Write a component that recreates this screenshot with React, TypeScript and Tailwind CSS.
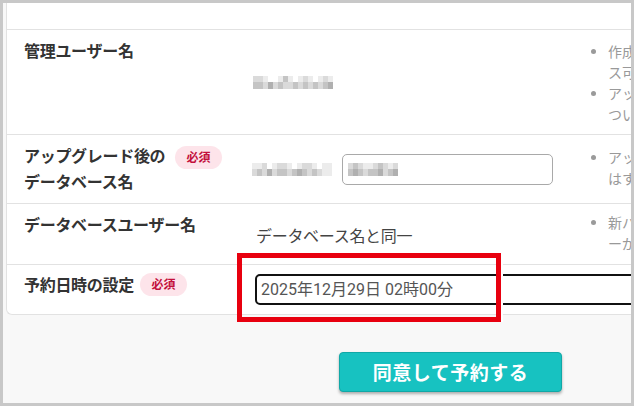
import React from "react";

function Mosaic({ top, bottom }: { top: string[]; bottom: string[] }) {
  return (
    <div className="flex flex-col blur-[0.6px]">
      <div className="flex">
        {top.map((c, i) => (
          <div key={i} className={`w-[5px] h-[6px] ${c}`} />
        ))}
      </div>
      <div className="flex">
        {bottom.map((c, i) => (
          <div key={i} className={`w-[5px] h-[7px] ${c}`} />
        ))}
      </div>
    </div>
  );
}

const L = "bg-[#ececec]";
const M = "bg-[#dadada]";
const D = "bg-[#c4c4c4]";
const K = "bg-[#b0b0b0]";
const W = "bg-white";

const m1t = [M, M, L, W, W, L, D, L, W, L, M, L, W, L, M, L];
const m1b = [D, D, M, K, M, D, M, M, D, M, D, M, D, M, D, K];
const m2t = [L, L, M, W, L, M, M, L, W, L, M, M, L, W, L, L];
const m2b = [M, D, M, K, M, D, D, M, D, K, D, M, D, M, L, L];
const m3t = [M, D, M, L, L, M, D, M, L, M];
const m3b = [D, K, D, M, D, D, K, M, D, K];

function Badge() {
  return (
    <span className="inline-flex items-center justify-center w-[47px] h-[23px] rounded-full bg-[#fde4ea] text-[#c3103c] text-[12px] font-bold leading-none">
      必須
    </span>
  );
}

function Notes({ items, pt }: { items: string[]; pt: string }) {
  return (
    <ul className={`flex flex-col pl-[3px] ${pt} text-[14px] leading-[21px] text-[#999]`}>
      {items.map((t, i) => (
        <li key={i} className="flex gap-[12px]">
          <span className="mt-[8px] w-[5px] h-[5px] rounded-full bg-[#9a9a9a] shrink-0" />
          <span className="w-[44px] whitespace-pre-line">{t}</span>
        </li>
      ))}
    </ul>
  );
}

export default function App() {
  return (
    <div className="relative w-[634px] h-[406px] border-[3px] border-[#c8c8c8] bg-[#f8f8f8] overflow-hidden font-[family-name:'Noto_Sans_CJK_JP','Noto_Sans',sans-serif]">
      <div className="ml-[3px] w-[720px] bg-white border-l border-b border-[#e2e2e2] rounded-bl-[6px]">
        {/* row 0 */}
        <div className="h-[27px] border-b border-[#e2e2e2]" />
        {/* row 1 */}
        <div className="flex h-[105px] border-b border-[#e2e2e2]">
          <div className="w-[245px] pl-[17px] pt-[7px] text-[16px] tracking-[-0.3px] leading-[26px] font-bold text-[#333]">
            管理ユーザー名
          </div>
          <div className="w-[336px] flex items-center pl-[1px]">
            <Mosaic top={m1t} bottom={m1b} />
          </div>
          <Notes pt="pt-[11px]" items={["作成\nス可", "アッ\nつい"]} />
        </div>
        {/* row 2 */}
        <div className="flex h-[69px] border-b border-[#e2e2e2]">
          <div className="w-[245px] pl-[17px] pt-[7px] flex items-start gap-[5px]">
            <div className="w-[146px] text-[16px] tracking-[-0.3px] leading-[26px] font-bold text-[#333]">
              アップグレード後の
              <br />
              データベース名
            </div>
            <div className="mt-[1px]">
              <Badge />
            </div>
          </div>
          <div className="w-[336px] flex items-center">
            <Mosaic top={m2t} bottom={m2b} />
            <div className="ml-[10px] w-[211px] h-[31px] rounded-[5px] border border-[#a9a9a9] flex items-center pl-[5px]">
              <Mosaic top={m3t} bottom={m3b} />
            </div>
          </div>
          <Notes pt="pt-[12px]" items={["アッ\nはす"]} />
        </div>
        {/* row 3 */}
        <div className="flex h-[61px] border-b border-[#e2e2e2]">
          <div className="w-[245px] pl-[17px] pt-[7px] text-[16px] tracking-[-0.3px] leading-[26px] font-bold text-[#333]">
            データベースユーザー名
          </div>
          <div className="w-[336px] flex items-center pl-[4px] pt-[2px] text-[16px] tracking-[-0.3px] text-[#444]">
            データベース名と同一
          </div>
          <Notes pt="pt-[8px]" items={["新バ\nーが"]} />
        </div>
        {/* row 4 */}
        <div className="flex h-[49px]">
          <div className="w-[245px] pl-[17px] pt-[6px] flex items-center self-start gap-[6px]">
            <div className="text-[16px] tracking-[-0.3px] leading-[26px] font-bold text-[#333]">
              予約日時の設定
            </div>
            <Badge />
          </div>
          <div className="flex-1 flex items-center pl-[3px]">
            <div className="w-[460px] h-[31px] rounded-l-[5px] border-2 border-[#111] flex items-center pl-[4px] text-[16px] text-[#555] font-[family-name:'Roboto','Noto_Sans_CJK_JP',sans-serif]">
              2025年12月29日&nbsp;02時00分
            </div>
          </div>
        </div>
      </div>

      <div className="ml-[336px] mt-[37px]">
        <button className="w-[223px] h-[40px] rounded-[4px] bg-[#17c2c1] border border-[#11a8a7] shadow-[0_2px_3px_rgba(0,0,0,0.3)] text-white text-[19px] font-bold tracking-[0.5px] flex items-center justify-center">
          同意して予約する
        </button>
      </div>

      {/* red annotation box */}
      <div className="absolute left-[234px] top-[250px] w-[264px] h-[69px] border-[5px] border-[#e8000f] shadow-[2px_0_0_0_white]" />
    </div>
  );
}
